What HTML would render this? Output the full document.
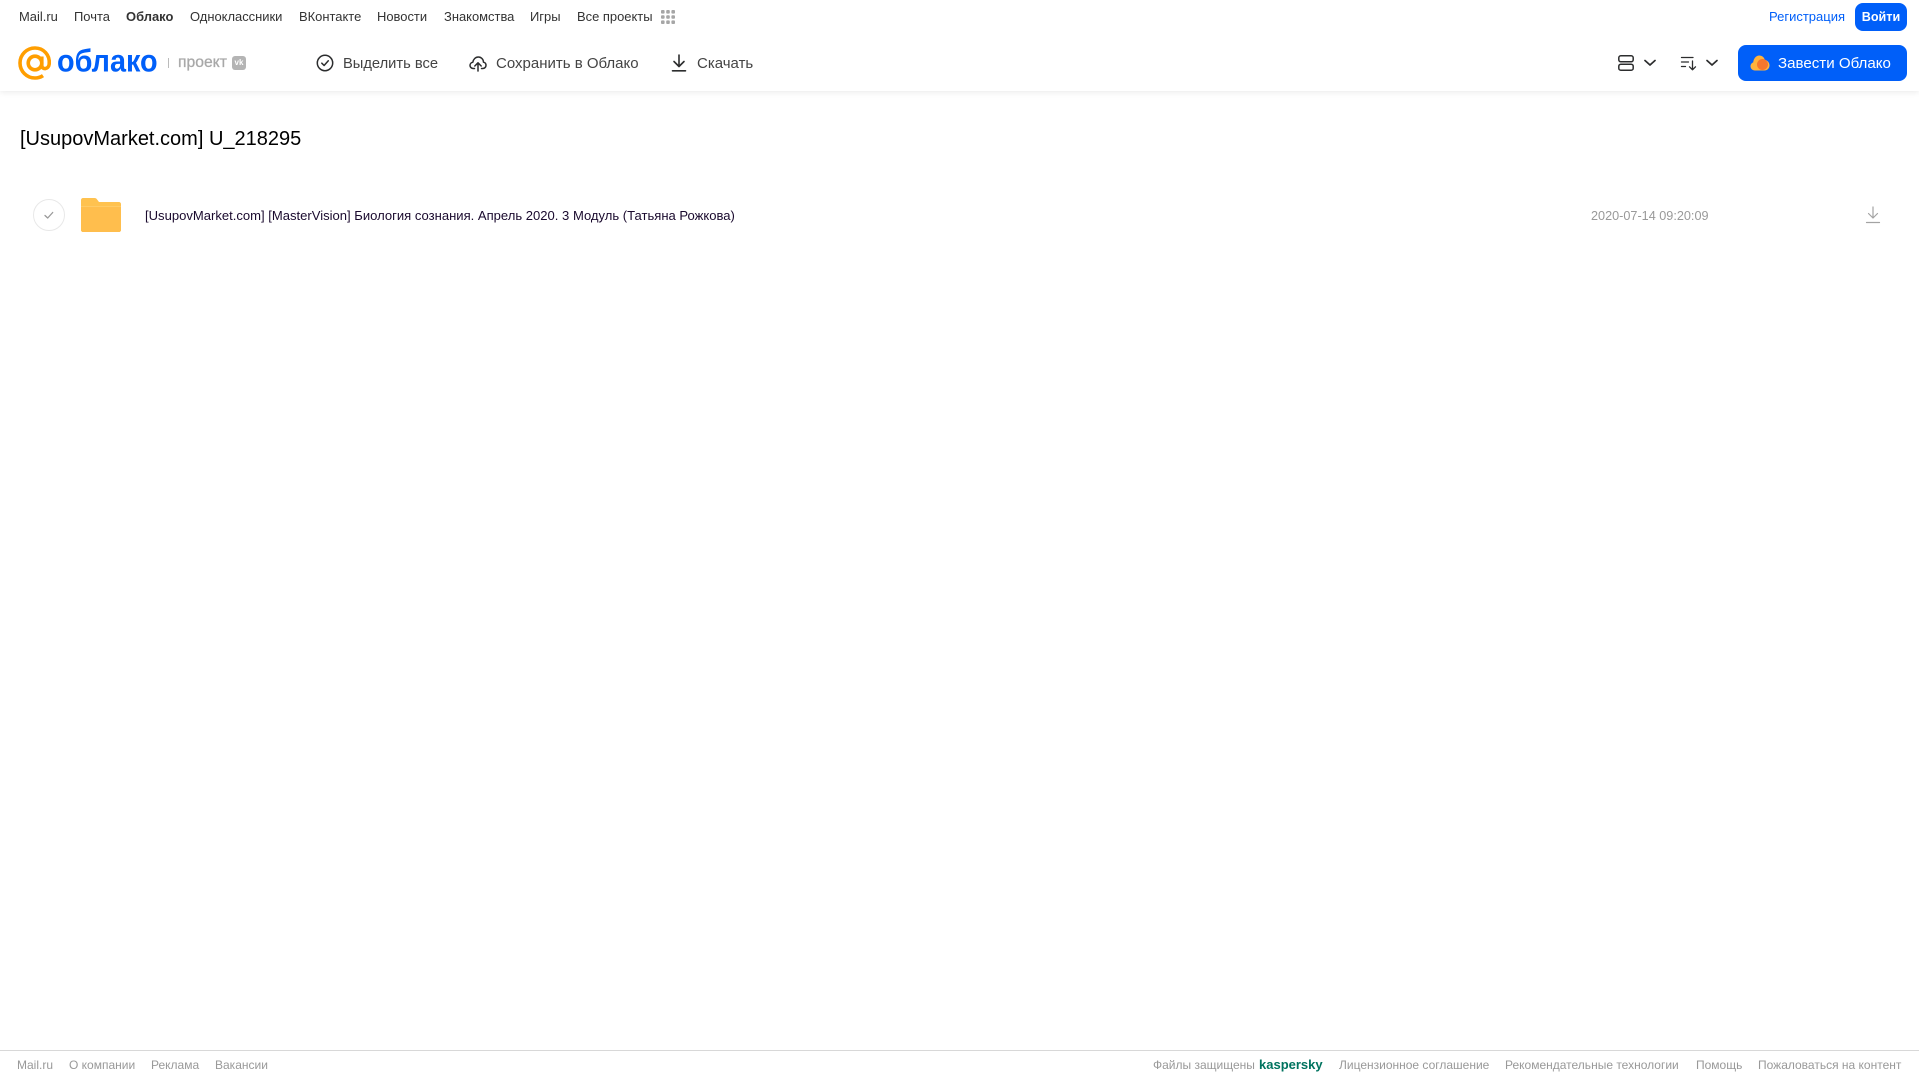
<!DOCTYPE html>
<html lang="ru">
<head>
<meta charset="utf-8">
<title>Облако</title>
<style>
html,body{margin:0;padding:0;background:#fff;width:1919px;height:1079px;overflow:hidden}
body{font-family:"Liberation Sans",Arial,sans-serif;position:relative}
.t{position:absolute;white-space:nowrap;line-height:20px;height:20px}
.n{font-size:12.95px;color:#333;top:7px}
.b{font-size:15px;color:#444;top:54px}
.f{font-size:12px;color:#999;top:1055px}
svg{position:absolute;display:block}
#hdr{position:absolute;left:0;top:0;width:1919px;height:91px;background:#fff;box-shadow:0 1px 6px rgba(0,0,0,.09)}
</style>
</head>
<body>
<div id="hdr"></div>

<div class="t n" style="left:19px">Mail.ru</div>
<div class="t n" style="left:74px">Почта</div>
<div class="t n" style="left:126px;font-weight:bold">Облако</div>
<div class="t n" style="left:190px">Одноклассники</div>
<div class="t n" style="left:299px">ВКонтакте</div>
<div class="t n" style="left:377px">Новости</div>
<div class="t n" style="left:444px">Знакомства</div>
<div class="t n" style="left:530px">Игры</div>
<div class="t n" style="left:577px">Все проекты</div>
<svg style="left:660px;top:9px" width="16" height="16" viewBox="0 0 16 16" fill="#a6a6a6">
<rect x="1" y="1" width="3.6" height="3.6" rx="1"/><rect x="6.2" y="1" width="3.6" height="3.6" rx="1"/><rect x="11.4" y="1" width="3.6" height="3.6" rx="1"/>
<rect x="1" y="6.2" width="3.6" height="3.6" rx="1"/><rect x="6.2" y="6.2" width="3.6" height="3.6" rx="1"/><rect x="11.4" y="6.2" width="3.6" height="3.6" rx="1"/>
<rect x="1" y="11.4" width="3.6" height="3.6" rx="1"/><rect x="6.2" y="11.4" width="3.6" height="3.6" rx="1"/><rect x="11.4" y="11.4" width="3.6" height="3.6" rx="1"/>
</svg>

<div class="t" style="left:1769px;top:7px;font-size:13px;color:#005ff9">Регистрация</div>
<div style="position:absolute;left:1855px;top:3px;width:52px;height:28px;border-radius:8px;background:#005ff9;color:#fff;font-size:12.6px;font-weight:bold;line-height:28px;text-align:center">Войти</div>

<!-- logo -->
<svg style="left:18px;top:46px" width="34" height="34" viewBox="0 0 34 34" fill="none" stroke="#ff9e00" stroke-width="3.6">
<circle cx="17" cy="17" r="6.8"/>
<path d="M23.8 10.500V19.500c0 4.400 6.900 4.200 7.400-1.500.9-9.200-5.800-16-14.200-16C8.700 2 2 8.700 2 17s6.700 15 15 15c3.200 0 5.700-.8 8-2.400"/>
</svg>
<div class="t" style="left:57px;top:46px;height:32px;line-height:32px;font-size:28.8px;font-weight:bold;color:#005ff9;transform:scaleY(1.08);transform-origin:0 60%">облако</div>
<div style="position:absolute;left:168px;top:58px;width:1px;height:10px;background:#bbb"></div>
<div class="t" style="left:178px;top:53px;font-size:15.7px;color:#a8a8a8;-webkit-text-stroke:.3px #a8a8a8">проект</div>
<div style="position:absolute;left:232px;top:56px;width:14px;height:14px;border-radius:3px;background:#b4b4b4;color:#fff;font-size:8px;font-weight:bold;line-height:14px;text-align:center">vk</div>

<!-- toolbar -->
<svg style="left:316px;top:54px" width="18" height="18" viewBox="0 0 18 18" fill="none" stroke="#2c2d2e" stroke-width="1.500" stroke-linecap="round" stroke-linejoin="round">
<circle cx="9" cy="9" r="7.700"/><path d="M5.800 9.200l2.300 2.300 4.200-4.700"/>
</svg>
<div class="t b" style="left:343px;font-size:14.7px">Выделить все</div>

<svg style="left:469px;top:54px" width="18" height="18" viewBox="0 0 18 18" fill="none" stroke="#2c2d2e" stroke-width="1.500" stroke-linecap="round" stroke-linejoin="round">
<path d="M5.500 14.500H4.200C2.400 14.500 1 13.100 1 11.400c0-1.600 1.200-2.900 2.800-3.100C4.300 5.300 6.500 3 9.300 3c2.900 0 5.100 2.300 5.200 5.200 1.500.3 2.500 1.600 2.500 3.100 0 1.800-1.400 3.200-3.200 3.200h-1.300"/>
<path d="M9 17V9M5.800 12L9 8.800 12.200 12"/>
</svg>
<div class="t b" style="left:496px">Сохранить в Облако</div>

<svg style="left:671px;top:54px" width="16" height="18" viewBox="0 0 16 18" fill="none" stroke="#2c2d2e" stroke-width="1.600" stroke-linecap="round" stroke-linejoin="round">
<path d="M8 1v11M3 7.500L8 12.500l5-5M1.500 16.800h13"/>
</svg>
<div class="t b" style="left:697px">Скачать</div>

<!-- right controls -->
<svg style="left:1617px;top:54px" width="18" height="18" viewBox="0 0 18 18" fill="none" stroke="#2c2d2e" stroke-width="1.500">
<rect x="1.800" y="1.800" width="14.400" height="6" rx="2"/><rect x="1.800" y="10.200" width="14.400" height="6" rx="2"/>
</svg>
<svg style="left:1643px;top:58px" width="14" height="10" viewBox="0 0 14 10" fill="none" stroke="#2c2d2e" stroke-width="1.700" stroke-linecap="round" stroke-linejoin="round"><path d="M2 2.500l5 4.500 5-4.500"/></svg>
<svg style="left:1680px;top:54px" width="18" height="18" viewBox="0 0 18 18" fill="none" stroke="#2c2d2e" stroke-width="1.300" stroke-linecap="round" stroke-linejoin="round">
<path d="M1.500 3.500h11.500M1.500 8h7M1.500 12.500h4M12.500 7v8.500M9.500 12.800l3 3 3-3"/>
</svg>
<svg style="left:1705px;top:58px" width="14" height="10" viewBox="0 0 14 10" fill="none" stroke="#2c2d2e" stroke-width="1.700" stroke-linecap="round" stroke-linejoin="round"><path d="M2 2.500l5 4.500 5-4.500"/></svg>

<div style="position:absolute;left:1738px;top:45px;width:169px;height:36px;border-radius:8px;background:#005ff9"></div>
<svg style="left:1750px;top:54px" width="20" height="18" viewBox="0 0 20 18">
<path d="M5 16.500C2.400 16.500.5 14.700.5 12.300c0-1.900 1.100-3.300 2.700-3.900C3.500 5 5.800 1.500 9.300 1.500c2.800 0 4.900 1.800 5.500 4.400 2.700.4 4.700 2.800 4.700 5.500 0 2.900-2.200 5.100-5 5.100z" fill="#ffb33c"/>
<circle cx="12.500" cy="10.500" r="5.500" fill="#f5772d"/>
</svg>
<div class="t" style="left:1778px;top:54px;font-size:15.1px;color:#fff">Завести Облако</div>

<!-- title -->
<div class="t" style="left:20px;top:126px;height:26px;line-height:26px;font-size:20px;color:#000">[UsupovMarket.com] U_218295</div>

<!-- row -->
<svg style="left:33px;top:199px" width="32" height="32" viewBox="0 0 32 32" fill="none">
<circle cx="16" cy="16" r="15.500" stroke="#e8e8e8" stroke-width="1"/>
<path d="M12 16.500l2.700 2.500 5-5.500" stroke="#999" stroke-width="1.300" stroke-linecap="round" stroke-linejoin="round"/>
</svg>
<svg style="left:81px;top:198px" width="40" height="34" viewBox="0 0 40 34">
<path d="M2 0h11.500c1.300 0 2 .6 2.800 1.700L18 4h20c1.100 0 2 .9 2 2v26c0 1.100-.9 2-2 2H2c-1.100 0-2-.9-2-2V2C0 .9.900 0 2 0z" fill="#ffc24f"/>
<path d="M0 8h40v24c0 1.100-.9 2-2 2H2c-1.100 0-2-.9-2-2z" fill="#ffbe4d"/>
<path d="M0 8h40v1H0z" fill="#ffcb66"/>
</svg>
<div class="t" style="left:145px;top:206px;font-size:13.05px;color:#1a0a2e">[UsupovMarket.com] [MasterVision] Биология сознания. Апрель 2020. 3 Модуль (Татьяна Рожкова)</div>
<div class="t" style="left:1591px;top:206px;font-size:12.66px;color:#999">2020-07-14 09:20:09</div>
<svg style="left:1865px;top:206px" width="16" height="18" viewBox="0 0 16 18" fill="none" stroke="#a3a3a3" stroke-width="1.200" stroke-linecap="round" stroke-linejoin="round">
<path d="M8 1v11M3.500 7.500L8 12l4.500-4.500M1.500 16.500h13"/>
</svg>

<!-- footer -->
<div style="position:absolute;left:0;top:1050px;width:1919px;height:1px;background:#d8d8d8"></div>
<div class="t f" style="left:17px">Mail.ru</div>
<div class="t f" style="left:69px">О компании</div>
<div class="t f" style="left:151px">Реклама</div>
<div class="t f" style="left:215px">Вакансии</div>
<div class="t f" style="left:1153px">Файлы защищены</div>
<div class="t f" style="left:1259px;font-weight:bold;color:#00735f;font-size:13px;top:1055px">kaspersky</div>
<div class="t f" style="left:1339px">Лицензионное соглашение</div>
<div class="t f" style="left:1505px">Рекомендательные технологии</div>
<div class="t f" style="left:1696px">Помощь</div>
<div class="t f" style="left:1758px">Пожаловаться на контент</div>
</body>
</html>
